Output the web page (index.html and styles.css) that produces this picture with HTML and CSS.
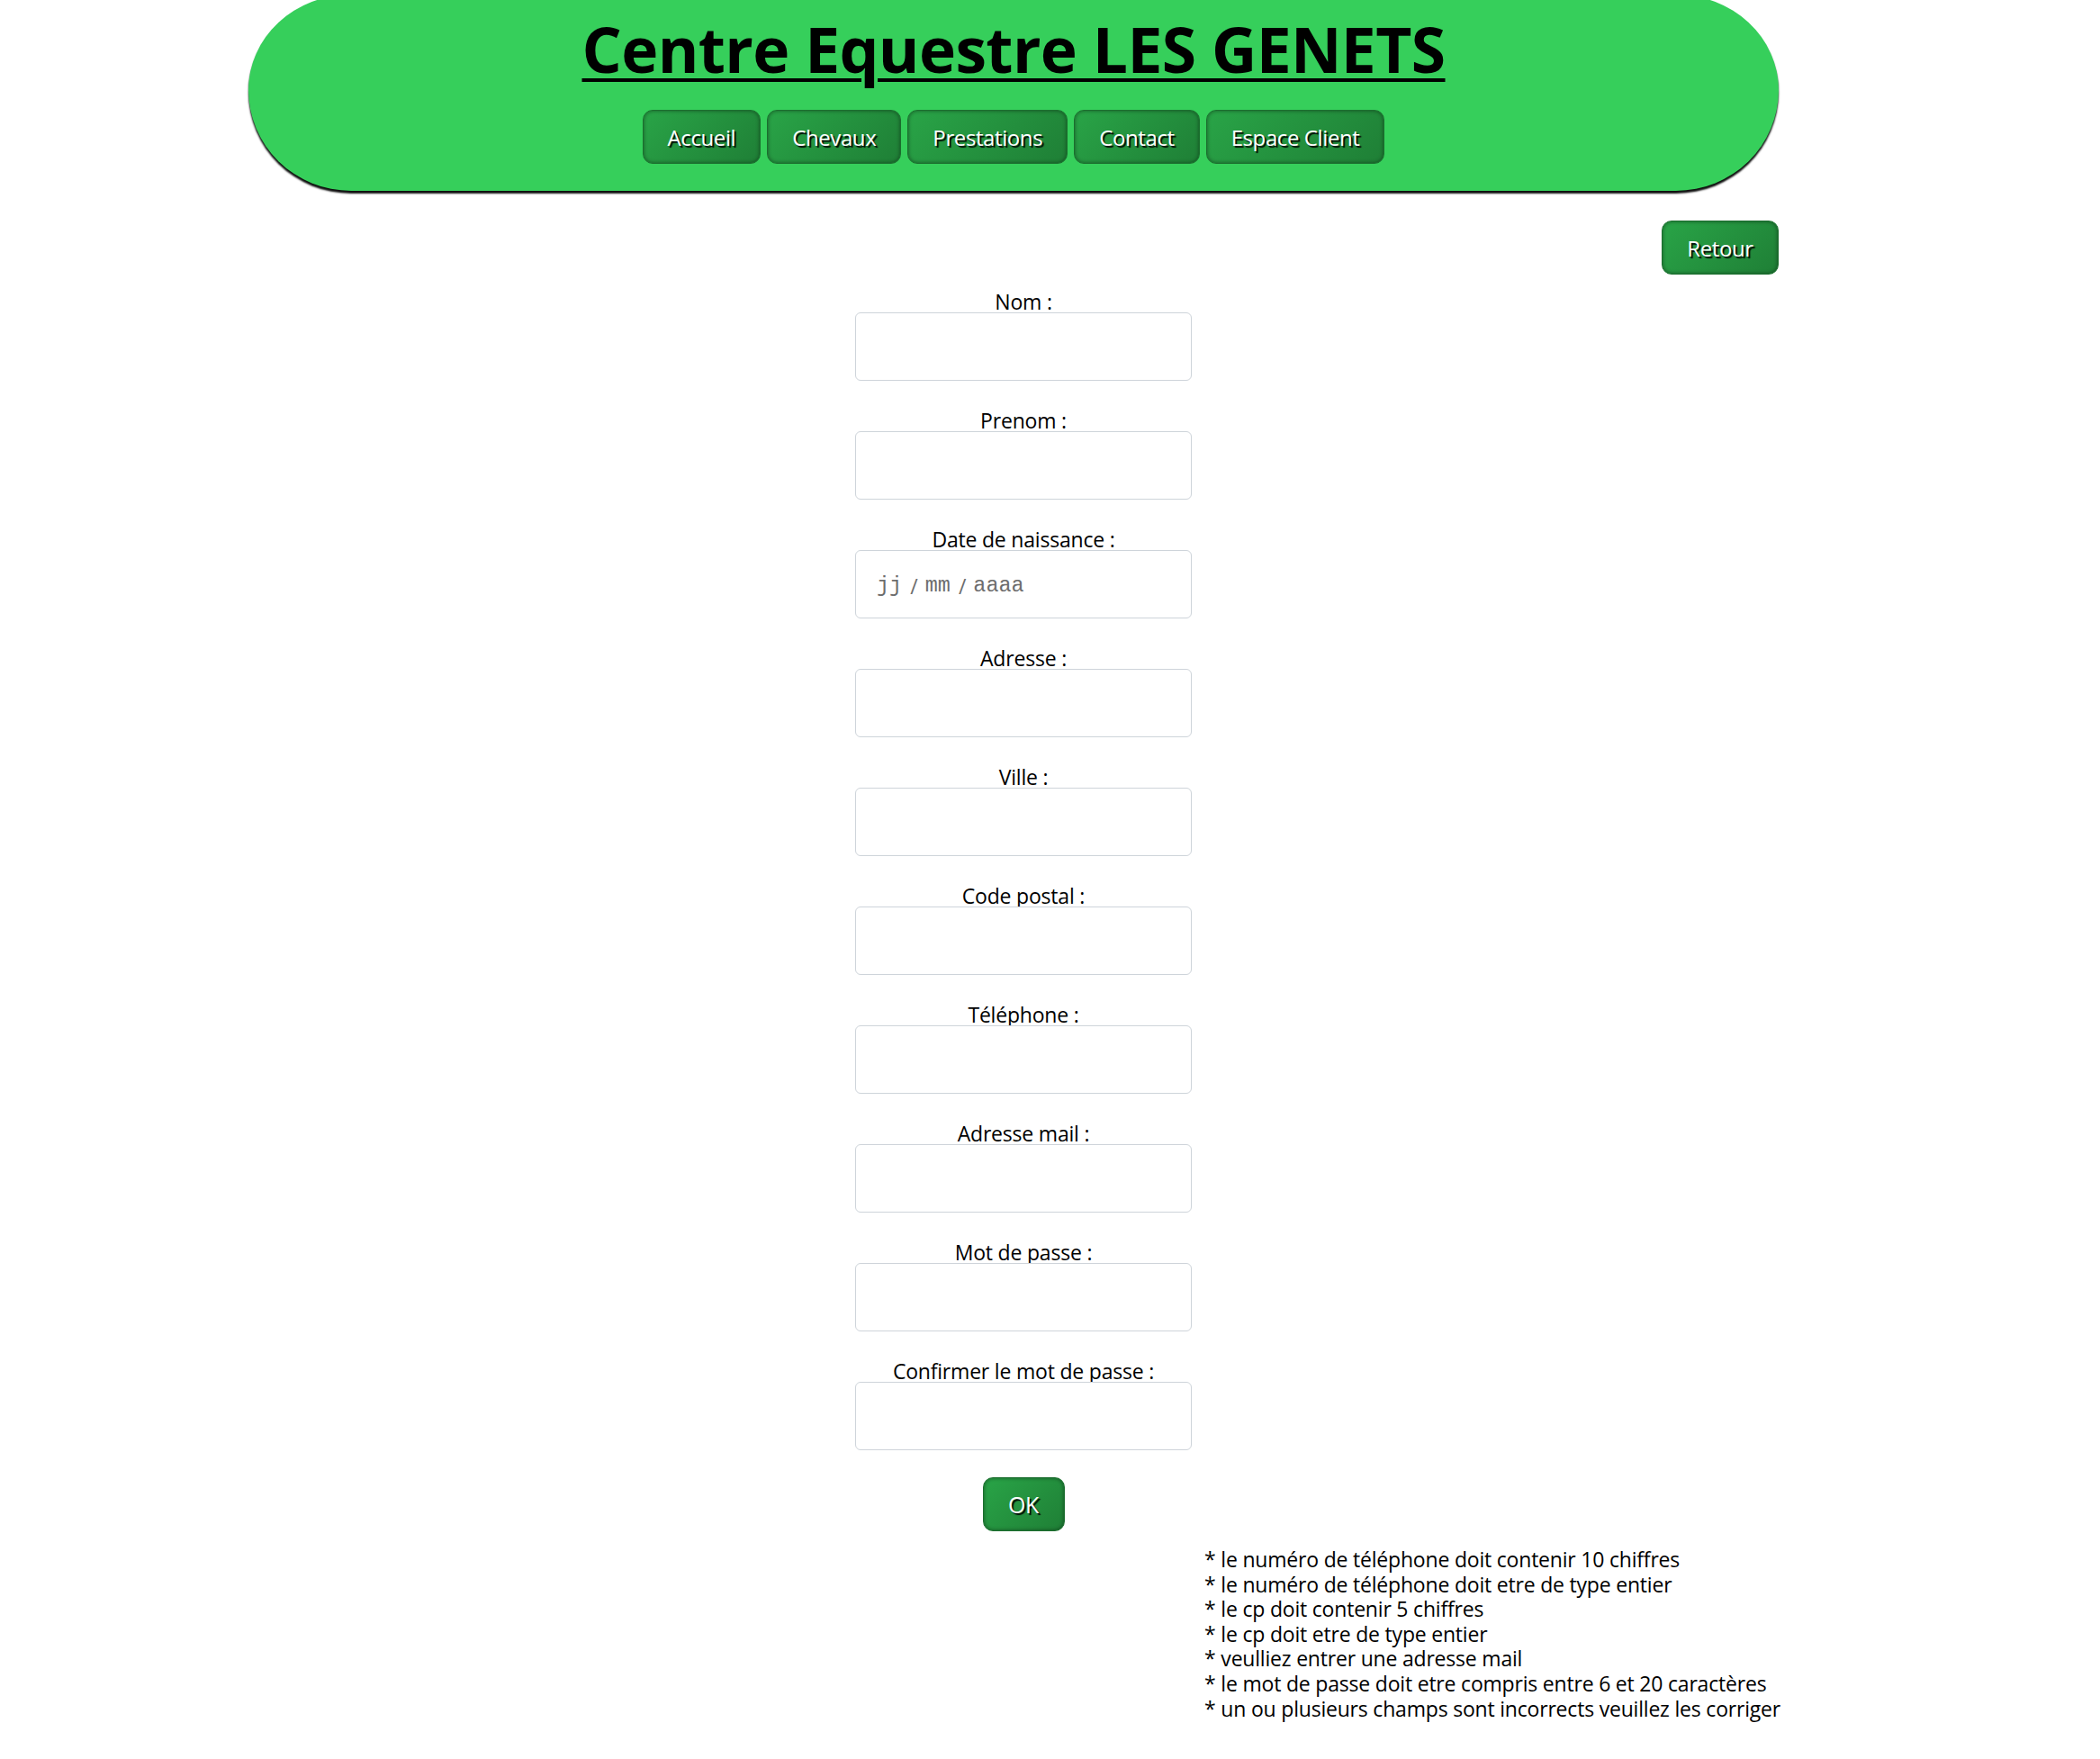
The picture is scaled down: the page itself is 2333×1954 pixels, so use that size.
FILE: index.html
```html
<!DOCTYPE html>
<html lang="fr">
<head>
<meta charset="utf-8">
<title>Centre Equestre LES GENETS - Inscription</title>
<link rel="stylesheet" href="styles.css">
</head>
<body>
<div class="page">
  <header class="banner">
    <h1 class="title">Centre Equestre LES GENETS</h1>
    <nav class="nav">
      <a class="btn nav-btn" href="#">Accueil</a>
      <a class="btn nav-btn" href="#">Chevaux</a>
      <a class="btn nav-btn" href="#">Prestations</a>
      <a class="btn nav-btn" href="#">Contact</a>
      <a class="btn nav-btn" href="#">Espace Client</a>
    </nav>
  </header>

  <div class="back-row">
    <a class="btn back-btn" href="#">Retour</a>
  </div>

  <form class="form">
    <div class="field"><label class="label">Nom :</label><input class="input" type="text"></div>
    <div class="field"><label class="label">Prenom :</label><input class="input" type="text"></div>
    <div class="field"><label class="label">Date de naissance :</label>
      <div class="input date" role="textbox" aria-label="Date de naissance"><span class="seg">jj</span><span class="sep">/</span><span class="seg">mm</span><span class="sep">/</span><span class="seg">aaaa</span></div>
    </div>
    <div class="field"><label class="label">Adresse :</label><input class="input" type="text"></div>
    <div class="field"><label class="label">Ville :</label><input class="input" type="text"></div>
    <div class="field"><label class="label">Code postal :</label><input class="input" type="text"></div>
    <div class="field"><label class="label">Téléphone :</label><input class="input" type="text"></div>
    <div class="field"><label class="label">Adresse mail :</label><input class="input" type="text"></div>
    <div class="field"><label class="label">Mot de passe :</label><input class="input" type="password"></div>
    <div class="field"><label class="label">Confirmer le mot de passe :</label><input class="input" type="password"></div>
    <button class="btn ok-btn" type="button">OK</button>
  </form>

  <div class="notes">
    <p>* le numéro de téléphone doit contenir 10 chiffres</p>
    <p>* le numéro de téléphone doit etre de type entier</p>
    <p>* le cp doit contenir 5 chiffres</p>
    <p>* le cp doit etre de type entier</p>
    <p>* veulliez entrer une adresse mail</p>
    <p>* le mot de passe doit etre compris entre 6 et 20 caractères</p>
    <p>* un ou plusieurs champs sont incorrects veuillez les corriger</p>
  </div>
</div>
</body>
</html>
```

FILE: styles.css
```css
html, body {
  margin: 0;
  padding: 0;
  background: #ffffff;
}

body {
  font-family: "Open Sans", "Noto Sans", "DejaVu Sans", sans-serif;
  color: #000;
}

.page {
  width: 1700px;
  margin-left: 276px;
  display: flex;
  flex-direction: column;
  padding-bottom: 40px;
}

/* ---------- header banner ---------- */
.banner {
  margin-top: -6px;
  height: 218px;
  box-sizing: border-box;
  background: #36cf5b;
  border-radius: 114px 114px 114px 114px / 106px 106px 112px 112px;
  box-shadow: 0 3px 2px rgba(0, 0, 0, 0.95);
  display: flex;
  flex-direction: column;
  align-items: center;
  padding-top: 6px;
}

.title {
  margin: 6px 0 0;
  font-family: "Open Sans", "Noto Sans", sans-serif;
  font-weight: 700;
  font-size: 69.5px;
  line-height: 96px;
  height: 96px;
  letter-spacing: -0.6px;
  text-decoration: underline;
  text-decoration-thickness: 4px;
  text-underline-offset: 6px;
  color: #000;
}

.nav {
  display: flex;
  gap: 7px;
  margin-top: 20px;
}

/* ---------- buttons ---------- */
.btn {
  display: inline-flex;
  align-items: center;
  justify-content: center;
  box-sizing: border-box;
  height: 60px;
  padding: 0 27px;
  font-family: "Open Sans", "Noto Sans", sans-serif;
  font-size: 24px;
  color: #fff;
  text-decoration: none;
  text-shadow: 2px 2px 1px rgba(0, 0, 0, 0.95);
  background: linear-gradient(135deg, #29a447 0%, #1f7f36 100%);
  border: 1px solid #1b6e2e;
  border-radius: 11px;
  box-shadow: inset 0 0 4px rgba(0, 0, 0, 0.45);
  letter-spacing: -0.4px;
}

.back-row {
  display: flex;
  justify-content: flex-end;
  margin-top: 33px;
}

.back-btn {
  width: 130px;
  padding: 0;
}

/* ---------- form ---------- */
.form {
  margin-left: 674px;
  width: 374px;
  display: flex;
  flex-direction: column;
  align-items: center;
  margin-top: 10px;
}

.field {
  display: flex;
  flex-direction: column;
  align-items: center;
  width: 100%;
  margin-bottom: 24px;
}

.label {
  display: block;
  box-sizing: border-box;
  font-size: 23px;
  line-height: 28px;
  height: 32px;
  padding-top: 6px;
  letter-spacing: -0.2px;
}

.input {
  box-sizing: border-box;
  width: 374px;
  height: 76px;
  border: 1px solid #ced4da;
  border-radius: 6px;
  background: #fff;
  padding: 0 24px;
  font-size: 22px;
  font-family: inherit;
  outline: none;
}

.input.date {
  display: flex;
  align-items: center;
  color: #6d6d6d;
  padding-left: 23px;
  padding-top: 3px;
}

.seg {
  font-family: "Liberation Mono", "DejaVu Sans Mono", monospace;
  font-size: 23.5px;
}

.sep {
  font-family: "Open Sans", "Noto Sans", sans-serif;
  font-size: 23px;
  margin: 0 8px 0 9px;
}

.ok-btn {
  width: 91px;
  padding: 0;
  margin-top: 6px;
  font-size: 25px;
  cursor: pointer;
}

/* ---------- notes ---------- */
.notes {
  align-self: flex-end;
  margin-top: 18px;
  margin-right: -2px;
  font-size: 23px;
  line-height: 27.6px;
  letter-spacing: -0.2px;
}

.notes p {
  margin: 0;
  white-space: nowrap;
}
```
